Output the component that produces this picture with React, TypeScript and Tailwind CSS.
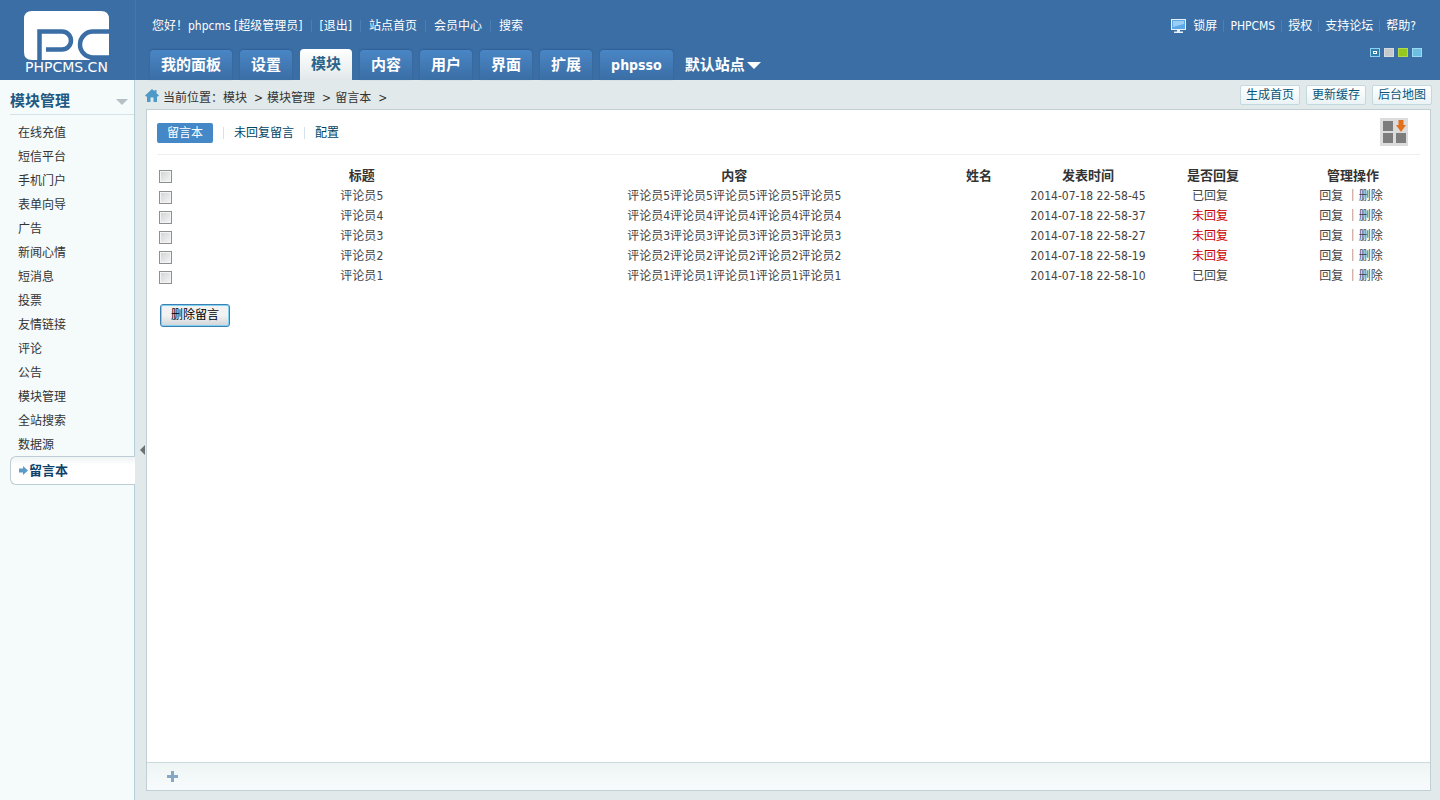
import { Fragment } from "react"

const userLinks = ["[退出]", "站点首页", "会员中心", "搜索"]
const helpLinks = ["PHPCMS", "授权", "支持论坛", "帮助?"]
const tabs = ["我的面板", "设置", "模块", "内容", "用户", "界面", "扩展"]
const crumbs = ["模块", "模块管理", "留言本"]
const shortcuts = ["生成首页", "更新缓存", "后台地图"]

const modules = [
    "在线充值",
    "短信平台",
    "手机门户",
    "表单向导",
    "广告",
    "新闻心情",
    "短消息",
    "投票",
    "友情链接",
    "评论",
    "公告",
    "模块管理",
    "全站搜索",
    "数据源",
]

const messages = [
    { id: 5, time: "2014-07-18 22-58-45", replied: true },
    { id: 4, time: "2014-07-18 22-58-37", replied: false },
    { id: 3, time: "2014-07-18 22-58-27", replied: false },
    { id: 2, time: "2014-07-18 22-58-19", replied: false },
    { id: 1, time: "2014-07-18 22-58-10", replied: true },
]

const skins = [
    { name: "灰色", style: "border-[#d5dadd] bg-[#c3c9cc]" },
    { name: "绿色", style: "border-[#b3dc4a] bg-[#95c71c]" },
    { name: "浅蓝", style: "border-[#9ad9ef] bg-[#6cbfe0]" },
]

function Logo() {
    return (
        <a href="#" aria-label="PHPCMS" className="block pt-[11px] pl-6">
            <svg width="90" height="66" viewBox="0 0 90 66">
                <path
                    d="M8 0H77Q85 0 85 8V49H8Q0 49 0 41V8Q0 0 8 0Z"
                    fill="#fff"
                />
                <g fill="none" stroke="#3a6ea5" strokeWidth="4.500">
                    <path d="M15.500 50V20.500H38a9 9 0 0 1 0 18H22" />
                    <path d="M86 20.500H69a13 13 0 0 0 0 26H86" />
                    <path d="M66 49H86" strokeWidth="2" />
                </g>
                <text
                    x="1"
                    y="61"
                    fill="#fff"
                    fontSize="14"
                    fontFamily="'DejaVu Sans', sans-serif"
                >
                    PHPCMS.CN
                </text>
            </svg>
        </a>
    )
}

function Divider() {
    return <span className="h-3 w-px bg-[#4a7fb5]" />
}

function Header() {
    return (
        <header className="flex h-20 bg-[#3a6ea5] text-white">
            <div className="w-[136px] shrink-0 border-r border-[#4578ad]">
                <Logo />
            </div>
            <div className="flex flex-1 flex-col justify-between pt-4 pl-3.5">
                <div className="flex h-5 items-center gap-2 pl-0.5 whitespace-nowrap">
                    <span>您好！phpcms [超级管理员]</span>
                    {userLinks.map((link) => (
                        <Fragment key={link}>
                            <Divider />
                            <a href="#">{link}</a>
                        </Fragment>
                    ))}
                </div>
                <nav className="flex items-end gap-2 text-[15px] font-bold whitespace-nowrap">
                    {tabs.map((tab) => (
                        <a
                            key={tab}
                            href="#"
                            className={
                                tab === "模块"
                                    ? "rounded-t bg-linear-to-b from-white to-[#e2e9ea] px-[11px] leading-[31px] text-[#2a6489]"
                                    : "rounded-t bg-linear-to-b from-[#4a86c5] to-[#3a6ea5] px-[11px] leading-[30px] shadow-[0_-1px_2px_#2f5f94]"
                            }
                        >
                            {tab}
                        </a>
                    ))}
                    <a
                        href="#"
                        className="rounded-t bg-linear-to-b from-[#4a86c5] to-[#3a6ea5] px-[11px] text-sm leading-[30px] shadow-[0_-1px_2px_#2f5f94]"
                    >
                        phpsso
                    </a>
                    <button type="button" className="flex items-center gap-0.5 pl-1 leading-[30px]">
                        默认站点
                        <span className="border-x-[7px] border-t-[7px] border-x-transparent border-t-white" />
                    </button>
                </nav>
            </div>
            <div className="flex flex-col items-end gap-3 pt-4 pr-[18px]">
                <div className="mr-1.5 flex h-5 items-center gap-1.5 whitespace-nowrap">
                    <svg width="16" height="16" viewBox="0 0 16 16">
                        <rect x="0.500" y="1.500" width="14" height="10" fill="#5aa9e6" stroke="#e8f1f8" />
                        <path d="M2 3H13V6L2 9Z" fill="#9ccdf2" />
                        <path d="M6 12H9V13.500H12V15H3V13.500H6Z" fill="#e8f1f8" />
                    </svg>
                    <a href="#">锁屏</a>
                    {helpLinks.map((link) => (
                        <Fragment key={link}>
                            <Divider />
                            <a href="#">{link}</a>
                        </Fragment>
                    ))}
                </div>
                <div className="flex gap-1">
                    <button
                        type="button"
                        aria-label="默认"
                        className="flex h-[9px] w-2.5 items-center justify-center border border-[#8fd0ee] bg-[#2f7fae]"
                    >
                        <span className="h-[3px] w-1 border border-white" />
                    </button>
                    {skins.map((skin) => (
                        <button
                            key={skin.name}
                            type="button"
                            aria-label={skin.name}
                            className={`h-[9px] w-2.5 border ${skin.style}`}
                        />
                    ))}
                </div>
            </div>
        </header>
    )
}

function Sidebar() {
    return (
        <aside className="w-[135px] shrink-0 border-r border-[#b5cfd9] bg-[#f5fafa] pl-2.5">
            <h3 className="flex h-[35px] items-center justify-between border-b border-[#d5e3ea] pt-2.5 pr-1.5 text-[15px] font-bold text-[#1f5a85]">
                模块管理
                <span className="border-x-[6px] border-t-[6px] border-x-transparent border-t-[#b6bfc4]" />
            </h3>
            <ul className="pt-1.5">
                {modules.map((item) => (
                    <li key={item} className="pl-2 leading-6 text-[#333]">
                        <a href="#">{item}</a>
                    </li>
                ))}
                <li className="-mt-px -mr-px rounded-l-md border border-r-0 border-[#bccdd5] bg-linear-to-b from-[#eff4f5] to-white to-30% pl-[7px]">
                    <a href="#" className="flex items-center text-[13px] leading-[27px] font-bold text-[#0d3f6b]">
                        <svg width="11" height="9" viewBox="0 0 11 9">
                            <path d="M1 2.500H5V0L10 4.500L5 9V6.500H1Z" fill="#5b9bc9" />
                        </svg>
                        留言本
                    </a>
                </li>
            </ul>
        </aside>
    )
}

function Breadcrumb() {
    return (
        <div className="flex h-[29px] items-center justify-between whitespace-nowrap">
            <div className="flex items-center pt-1.5 text-[#333]">
                <svg width="14" height="13" viewBox="0 0 14 13" className="mr-1 mb-1">
                    <path
                        d="M7 0L9.500 2.300V1H11.500V4.200L14 6.600L13 7.500H12V13H8.500V8.500H5.500V13H2V7.500H1L0 6.600Z"
                        fill="#4d9ac6"
                    />
                </svg>
                <span>当前位置：</span>
                {crumbs.map((crumb) => (
                    <span key={crumb}>
                        {crumb}
                        <span className="pr-1 pl-[7px]">&gt;</span>
                    </span>
                ))}
            </div>
            <div className="flex gap-1.5 text-[#0b5577]">
                {shortcuts.map((name) => (
                    <a
                        key={name}
                        href="#"
                        className="rounded-xs border border-[#c3d9e0] bg-linear-to-b from-white to-[#eaf3f6] px-[5px] leading-[18px]"
                    >
                        {name}
                    </a>
                ))}
            </div>
        </div>
    )
}

function CheckBox({ label }: { label: string }) {
    return (
        <input
            type="checkbox"
            aria-label={label}
            className="mt-0.5 ml-0.5 block size-[13px] appearance-none border border-[#8e8f8f] bg-linear-to-br from-[#cfd2d5] to-[#f6f6f6] shadow-[inset_0_0_0_1px_#f4f4f4]"
        />
    )
}

function MessageTable() {
    return (
        <table className="w-full table-fixed text-center leading-5 text-[#444]">
            <thead>
                <tr className="h-[21px] text-[13px] leading-5 text-[#333]">
                    <th className="w-7">
                        <CheckBox label="全选" />
                    </th>
                    <th className="w-[28%]">标题</th>
                    <th>内容</th>
                    <th className="w-[98px]">姓名</th>
                    <th className="w-[120px]">发表时间</th>
                    <th className="w-[130px]">是否回复</th>
                    <th className="w-[142px] pl-2">管理操作</th>
                </tr>
            </thead>
            <tbody>
                {messages.map(({ id, time, replied }) => (
                    <tr key={id} className="h-5">
                        <td>
                            <CheckBox label={`评论员${id}`} />
                        </td>
                        <td>评论员{id}</td>
                        <td>{`评论员${id}`.repeat(5)}</td>
                        <td></td>
                        <td className="whitespace-nowrap">{time}</td>
                        <td className={replied ? "pr-1.5" : "pr-1.5 text-[#c00]"}>
                            {replied ? "已回复" : "未回复"}
                        </td>
                        <td className="pl-1">
                            <a href="#">回复</a> ｜<a href="#">删除</a>
                        </td>
                    </tr>
                ))}
            </tbody>
        </table>
    )
}

function Panel() {
    return (
        <section className="mr-[9px] mb-[9px] ml-px flex flex-1 flex-col border border-[#c2cfd5] bg-white">
            <div className="flex-1 px-2.5">
                <div className="flex h-[45px] items-center justify-between border-b border-[#eceef0]">
                    <div className="flex items-center gap-2.5 pt-0.5 text-[#004465]">
                        <a href="#" className="rounded-xs bg-[#4488c8] px-2.5 leading-5 text-white">
                            留言本
                        </a>
                        <span className="h-3 w-px bg-[#d5e2ec]" />
                        <a href="#">未回复留言</a>
                        <span className="h-3 w-px bg-[#d5e2ec]" />
                        <a href="#">配置</a>
                    </div>
                    <button type="button" aria-label="添加到快捷方式" className="mr-3">
                        <svg width="28" height="28" viewBox="0 0 28 28">
                            <rect width="28" height="28" fill="#dcdcdc" />
                            <path d="M3 3H13V13H3ZM3 15H13V25H3ZM16 15H26V25H16Z" fill="#7d7d7d" />
                            <path d="M18.500 2H23.500V7H26L21 14L16 7H18.500Z" fill="#e2701c" />
                        </svg>
                    </button>
                </div>
                <div className="pt-2.5">
                    <MessageTable />
                </div>
                <button
                    type="button"
                    className="mt-[18px] ml-[3px] rounded-[3px] border border-[#3c7fb1] bg-linear-to-b from-[#f2f2f2] from-50% to-[#d0d4d8] px-2.5 leading-[21px] text-black shadow-[inset_0_0_0_1px_#7fd3f2]"
                >
                    删除留言
                </button>
            </div>
            <footer className="flex h-7 items-center border-t border-[#cbdadf] bg-linear-to-b from-[#eef5f4] to-[#f8fbfd] pl-5">
                <button type="button" aria-label="添加">
                    <svg width="11" height="11" viewBox="0 0 11 11">
                        <path d="M4 0H7V4H11V7H7V11H4V7H0V4H4Z" fill="#85a9c4" />
                    </svg>
                </button>
            </footer>
        </section>
    )
}

export default function App() {
    return (
        <div className="flex min-h-screen flex-col bg-[#e2e9ea] font-['DejaVu_Sans_Condensed','Noto_Sans','Noto_Sans_CJK_SC',sans-serif] text-xs">
            <Header />
            <div className="flex flex-1">
                <Sidebar />
                <button type="button" aria-label="收起菜单" className="flex w-2.5 items-center justify-end pt-5">
                    <span className="border-y-[5px] border-r-[5px] border-y-transparent border-r-[#6b7073]" />
                </button>
                <main className="flex min-w-0 flex-1 flex-col">
                    <div className="pr-2">
                        <Breadcrumb />
                    </div>
                    <Panel />
                </main>
            </div>
        </div>
    )
}
